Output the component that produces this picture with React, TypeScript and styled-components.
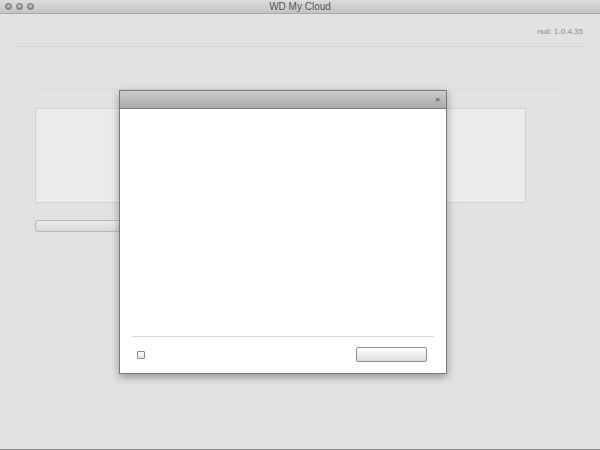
import styled, { createGlobalStyle } from "styled-components";

const Global = createGlobalStyle`
  html, body {
    margin: 0;
    padding: 0;
    background: #e1e2e1;
  }
  body {
    font-family: "Liberation Sans", Arial, sans-serif;
  }
`;

const Window = styled.div`
  position: relative;
  width: 600px;
  height: 450px;
  display: flex;
  flex-direction: column;
  background: #e1e2e1;
  overflow: hidden;
  border-bottom: 1px solid #8a8a8a;
  box-sizing: border-box;
`;

const TitleBar = styled.div`
  height: 13px;
  display: flex;
  align-items: center;
  position: relative;
  background: linear-gradient(#dcdcdc, #c4c4c4);
  border-bottom: 1px solid #a9a9a9;
  padding-left: 5px;
  gap: 4px;
`;

const Light = styled.span`
  width: 7px;
  height: 7px;
  border-radius: 50%;
  background: radial-gradient(circle at 50% 35%, #c9c9c9, #7d7d7d);
  border: 1px solid #6f6f6f;
  box-sizing: border-box;
`;

const WinTitle = styled.div`
  position: absolute;
  left: 0;
  right: 0;
  top: 0;
  height: 13px;
  line-height: 13px;
  text-align: center;
  font-size: 10px;
  color: #555;
  pointer-events: none;
`;

const Content = styled.div`
  flex: 1;
  display: flex;
  flex-direction: column;
  padding: 0 12px;
`;

const VersionRow = styled.div`
  height: 33px;
  box-sizing: border-box;
  display: flex;
  justify-content: flex-end;
  align-items: flex-end;
  padding: 0 5px 10px 0;
  border-bottom: 1px solid #d6d7d6;
  font-size: 8px;
  color: #8d8d8d;
`;

const Section = styled.div`
  margin: 42px 25px 0 25px;
  border-top: 1px dotted #d2d3d2;
  padding-top: 18px;
  display: flex;
  flex-direction: column;
  gap: 17px;
`;

const Panel = styled.div`
  width: 491px;
  height: 95px;
  margin-left: -2px;
  background: #ececec;
  border: 1px solid #d2d2d2;
  box-sizing: border-box;
`;

const Bar = styled.div`
  width: 160px;
  height: 12px;
  margin-left: -2px;
  border: 1px solid #b9b9b9;
  border-radius: 3px;
  background: linear-gradient(#ececec, #d9d9d9);
  box-sizing: border-box;
`;

const Dialog = styled.div`
  position: absolute;
  left: 119px;
  top: 90px;
  width: 328px;
  height: 284px;
  display: flex;
  flex-direction: column;
  border: 1px solid #7a7a7a;
  box-sizing: border-box;
  background: #ffffff;
  box-shadow: 0 3px 8px rgba(0, 0, 0, 0.35);
`;

const DialogBar = styled.div`
  height: 17px;
  display: flex;
  justify-content: flex-end;
  align-items: center;
  padding-right: 6px;
  background: linear-gradient(#cdcdcd, #a9a9a9);
  border-bottom: 1px solid #7c7c7c;
`;

const Close = styled.span`
  font-size: 8px;
  line-height: 8px;
  color: #555;
  font-weight: bold;
`;

const DialogBody = styled.div`
  flex: 1;
`;

const Divider = styled.div`
  height: 1px;
  margin: 0 12px;
  background: #d9d9d9;
`;

const Footer = styled.div`
  height: 36px;
  display: flex;
  align-items: center;
  justify-content: space-between;
  padding: 0 19px 0 17px;
`;

const Check = styled.span`
  width: 8px;
  height: 8px;
  border: 1px solid #8e8e8e;
  border-radius: 1px;
  background: linear-gradient(#fdfdfd, #e4e4e4);
  box-sizing: border-box;
`;

const Button = styled.button`
  width: 71px;
  height: 15px;
  padding: 0;
  margin-top: -2px;
  border: 1px solid #8e8e8e;
  border-radius: 2px;
  background: linear-gradient(#ffffff, #dedede);
`;

export default function App() {
  return (
    <Window>
      <Global />
      <TitleBar>
        <Light />
        <Light />
        <Light />
        <WinTitle>WD My Cloud</WinTitle>
      </TitleBar>
      <Content>
        <VersionRow>null: 1.0.4.35</VersionRow>
        <Section>
          <Panel />
          <Bar />
        </Section>
      </Content>
      <Dialog>
        <DialogBar>
          <Close>×</Close>
        </DialogBar>
        <DialogBody />
        <Divider />
        <Footer>
          <Check />
          <Button />
        </Footer>
      </Dialog>
    </Window>
  );
}
